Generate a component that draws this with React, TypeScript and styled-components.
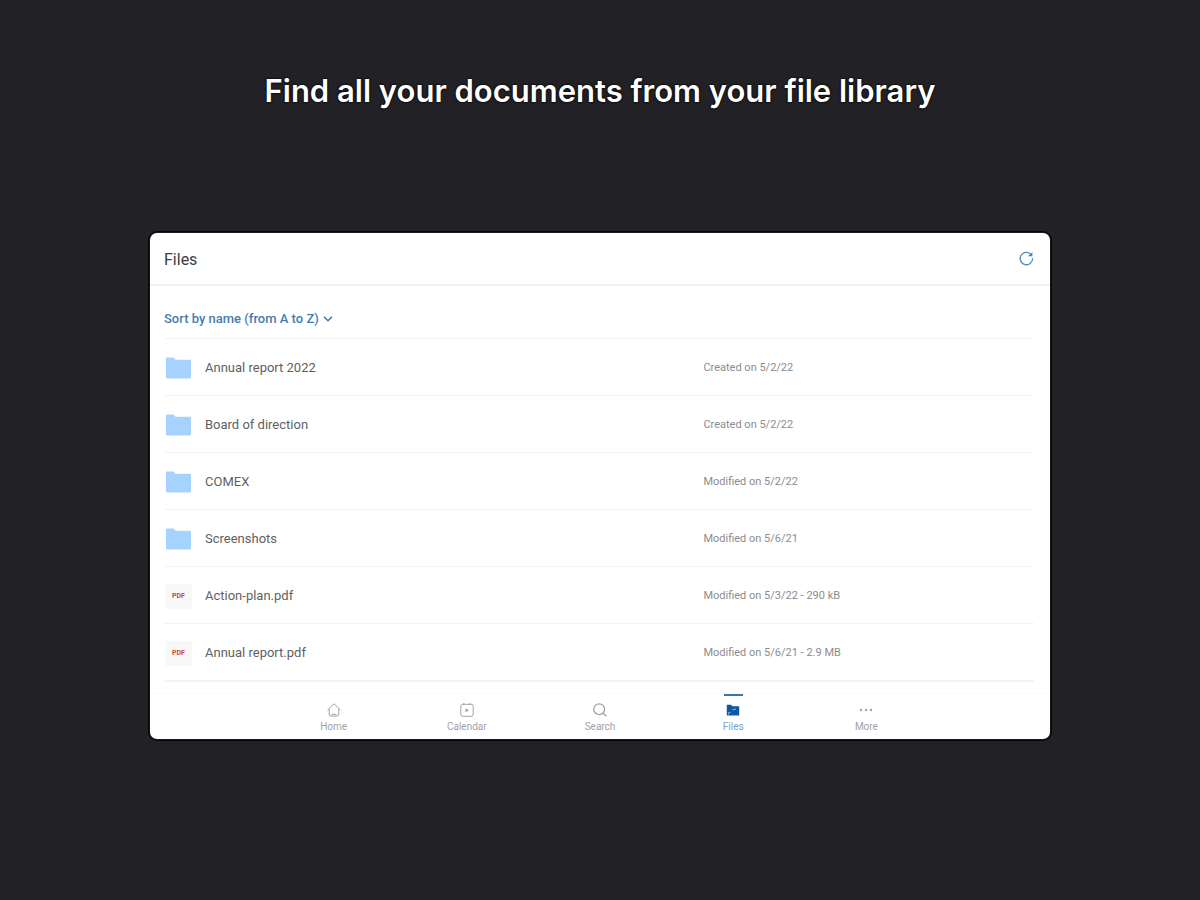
import React from "react";
import styled, { createGlobalStyle } from "styled-components";

const GlobalStyle = createGlobalStyle`
  *, *::before, *::after { box-sizing: border-box; }
  body { margin: 0; background: #222125; font-family: Roboto, sans-serif; }
  button { font: inherit; border: 0; background: none; padding: 0; cursor: pointer; }
`;

const Page = styled.main`
  display: flex;
  flex-direction: column;
  align-items: center;
  min-height: 100vh;
  padding: 72px 0 24px;
`;

const Headline = styled.h1`
  margin: 0 0 123px;
  color: #fff;
  font: 600 31px/38px Inter, sans-serif;
  text-align: center;
  text-shadow: 0 0 2px #000, 0 0 2px #000;
`;

const Card = styled.section`
  width: 75%;
  background: #fff;
  border-radius: 7px;
  box-shadow: 0 0 0 1px #1a1a1b, 0 0 0 2px #060607;
  overflow: hidden;
`;

const Header = styled.header`
  display: flex;
  align-items: center;
  justify-content: space-between;
  height: 53px;
  padding: 0 16px 0 14px;
  border-bottom: 2px solid #f1f1f2;
`;

const Title = styled.h2`
  margin: 0;
  padding-top: 2px;
  color: #3c3c3e;
  font-size: 16px;
  font-weight: 400;
  line-height: 20px;
`;

const IconButton = styled.button`
  display: flex;
  color: #4f8cc0;
`;

const Content = styled.div`
  padding: 0 16px 0 14px;
`;

const SortButton = styled.button`
  display: flex;
  align-items: center;
  gap: 4px;
  height: 52px;
  padding-top: 14px;
  color: #467cb0;

  && {
    font-size: 13px;
    font-weight: 500;
    line-height: 16px;
  }
`;

const FileTable = styled.table`
  width: 100%;
  border-collapse: separate;
  border-spacing: 0;
  table-layout: fixed;
  border-bottom: 2px solid #f4f4f5;
`;

const FileRow = styled.tr`
  height: 57px;
`;

const Cell = styled.td<{ $wide?: boolean }>`
  width: ${({ $wide }) => ($wide ? "62%" : "38%")};
  padding: 2px 0 0;
  border-top: 1px solid #f3f3f4;
  color: #8c8c8e;
  font-size: 11px;
  line-height: 16px;
`;

const FileName = styled.div`
  display: flex;
  align-items: center;
  gap: 13px;
  padding-left: 1px;
  color: #5f5f61;
  font-size: 13px;
  line-height: 18px;
`;

const PdfBadge = styled.span`
  display: flex;
  align-items: center;
  justify-content: center;
  width: 27px;
  height: 25px;
  border-radius: 2px;
  background: #f8f8f8;
  color: #cc4840;
  font-size: 7px;
  font-weight: 700;
  line-height: 8px;
`;

const Nav = styled.nav`
  display: flex;
  justify-content: center;
  height: 46px;
  margin-top: 11px;
  padding: 0 13%;
  border-top: 1px solid #fafafa;
`;

const NavLink = styled.a<{ $active?: boolean }>`
  display: flex;
  flex: 1;
  flex-direction: column;
  align-items: center;
  gap: 3px;
  color: ${({ $active }) => ($active ? "#74a5d0" : "#a2a2a4")};
  font-size: 10px;
  line-height: 12px;
  text-decoration: none;

  &::before {
    content: "";
    width: 19px;
    height: 2px;
    margin-bottom: 3px;
    background: ${({ $active }) => ($active ? "#3974ac" : "transparent")};
  }
`;

const FolderIcon = () => (
  <svg width="27" height="22" viewBox="0 0 27 22" aria-hidden="true">
    <path d="M1 1.5Q1 .5 2 .5H8.5L10.5 2.8H25Q26 2.8 26 3.8V20Q26 21.5 24.5 21.5H2.5Q1 21.5 1 20Z" fill="#a6d2ff" />
  </svg>
);

const RefreshIcon = () => (
  <svg width="15" height="15" viewBox="0 0 15 15" fill="none" stroke="currentColor" strokeWidth="1.3" strokeLinecap="round" aria-hidden="true">
    <path d="M13.6 7.6A6.2 6.2 0 1 1 11.4 2.8" />
    <path d="M9 5.2H13.4V1.2Z" fill="#3d87c4" stroke="none" />
  </svg>
);

const ChevronIcon = () => (
  <svg width="10" height="8" viewBox="0 0 10 8" fill="none" stroke="currentColor" strokeWidth="1.6" aria-hidden="true">
    <path d="M1 1.7 5 5.7 9 1.7" />
  </svg>
);

const NavIcon = ({ children }: { children: React.ReactNode }) => (
  <svg width="16" height="16" viewBox="0 0 16 16" fill="none" stroke="currentColor" strokeWidth="1" strokeLinejoin="round" aria-hidden="true">
    {children}
  </svg>
);

const files = [
  { name: "Annual report 2022", info: "Created on 5/2/22" },
  { name: "Board of direction", info: "Created on 5/2/22" },
  { name: "COMEX", info: "Modified on 5/2/22" },
  { name: "Screenshots", info: "Modified on 5/6/21" },
  { name: "Action-plan.pdf", info: "Modified on 5/3/22 - 290 kB", pdf: true },
  { name: "Annual report.pdf", info: "Modified on 5/6/21 - 2.9 MB", pdf: true },
];

const tabs = [
  {
    label: "Home",
    icon: <path d="M1.5 8 8 1.8 14.5 8M3.2 7V12.2Q3.2 14 5 14H11Q12.8 14 12.8 12.2V7M5.5 12.3H10.5" />,
  },
  {
    label: "Calendar",
    icon: (
      <>
        <rect x="1.8" y="2.3" width="12.4" height="12" rx="2" />
        <path d="M4.8 1V3M11.2 1V3" />
        <path d="M6.5 6.2 10 8.2 6.5 10.2Z" fill="currentColor" stroke="none" />
      </>
    ),
  },
  {
    label: "Search",
    icon: (
      <g strokeWidth="1.3">
        <circle cx="7.2" cy="7.2" r="5.4" />
        <path d="M11.2 11.2 14.3 14.3" />
      </g>
    ),
  },
  {
    label: "Files",
    active: true,
    icon: (
      <>
        <path d="M1.8 2.8H6L7.4 4.2H14.2V13.4H1.8Z" fill="#0f59a2" stroke="none" />
        <path d="M3.5 12.8V10.6H5.6M7.2 7.6H10.2V6.2" stroke="#9fc3e3" strokeWidth="0.8" />
      </>
    ),
  },
  {
    label: "More",
    icon: (
      <g fill="currentColor" stroke="none">
        <circle cx="3" cy="8" r="1.2" />
        <circle cx="8" cy="8" r="1.2" />
        <circle cx="13" cy="8" r="1.2" />
      </g>
    ),
  },
];

export default function App() {
  return (
    <>
      <GlobalStyle />
      <Page>
        <Headline>Find all your documents from your file library</Headline>
        <Card>
          <Header>
            <Title>Files</Title>
            <IconButton type="button" aria-label="Refresh">
              <RefreshIcon />
            </IconButton>
          </Header>
          <Content>
            <SortButton type="button">
              Sort by name (from A to Z)
              <ChevronIcon />
            </SortButton>
            <FileTable aria-label="Files">
              <tbody>
                {files.map((file) => (
                  <FileRow key={file.name}>
                    <Cell $wide>
                      <FileName>
                        {file.pdf ? <PdfBadge>PDF</PdfBadge> : <FolderIcon />}
                        {file.name}
                      </FileName>
                    </Cell>
                    <Cell>{file.info}</Cell>
                  </FileRow>
                ))}
              </tbody>
            </FileTable>
          </Content>
          <Nav aria-label="Main">
            {tabs.map((tab) => (
              <NavLink key={tab.label} href="#" $active={tab.active} aria-current={tab.active ? "page" : undefined}>
                <NavIcon>{tab.icon}</NavIcon>
                {tab.label}
              </NavLink>
            ))}
          </Nav>
        </Card>
      </Page>
    </>
  );
}
